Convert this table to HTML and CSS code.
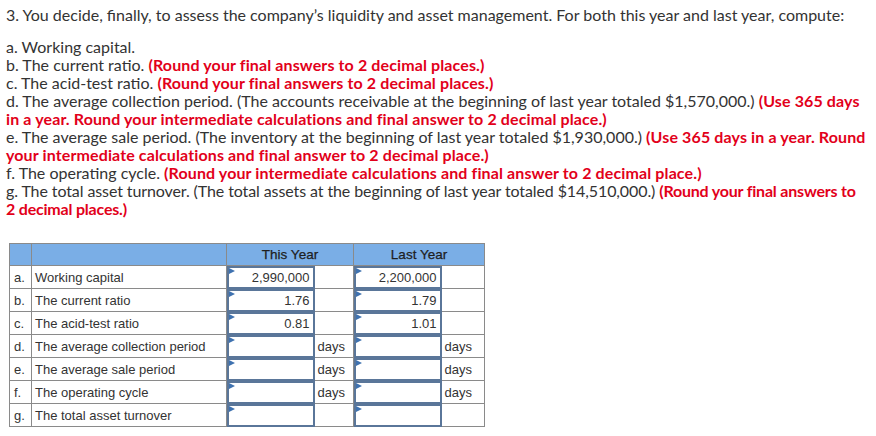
FILE: index.html
```html
<!DOCTYPE html>
<html>
<head>
<meta charset="utf-8">
<link rel="stylesheet" href="styles.css">
</head>
<body>
<div class="q">
  <p class="intro">3. You decide, finally, to assess the company’s liquidity and asset management. For both this year and last year, compute:</p>
  <div class="items">
    <div>a. Working capital.</div>
    <div>b. The current ratio. <b>(Round your final answers to 2 decimal places.)</b></div>
    <div>c. The acid-test ratio. <b>(Round your final answers to 2 decimal places.)</b></div>
    <div>d. The average collection period. (The accounts receivable at the beginning of last year totaled $1,570,000.) <b>(Use 365 days<br>in a year. Round your intermediate calculations and final answer to 2 decimal place.)</b></div>
    <div>e. The average sale period. (The inventory at the beginning of last year totaled $1,930,000.) <b>(Use 365 days in a year. Round<br>your intermediate calculations and final answer to 2 decimal place.)</b></div>
    <div>f. The operating cycle. <b>(Round your intermediate calculations and final answer to 2 decimal place.)</b></div>
    <div class="tight">g. The total asset turnover. (The total assets at the beginning of last year totaled $14,510,000.) <b>(Round your final answers to<br>2 decimal places.)</b></div>
  </div>
</div>

<table class="grid">
  <colgroup>
    <col class="c-letter"><col class="c-desc"><col class="c-in"><col class="c-unit"><col class="c-in"><col class="c-unit2">
  </colgroup>
  <thead>
    <tr><th></th><th></th><th colspan="2">This Year</th><th colspan="2">Last Year</th></tr>
  </thead>
  <tbody>
    <tr><td class="let">a.</td><td class="desc">Working capital</td><td class="in"><span class="box">2,990,000</span></td><td class="unit"></td><td class="in"><span class="box">2,200,000</span></td><td class="unit"></td></tr>
    <tr><td class="let">b.</td><td class="desc">The current ratio</td><td class="in"><span class="box">1.76</span></td><td class="unit"></td><td class="in"><span class="box">1.79</span></td><td class="unit"></td></tr>
    <tr><td class="let">c.</td><td class="desc">The acid-test ratio</td><td class="in"><span class="box">0.81</span></td><td class="unit"></td><td class="in"><span class="box">1.01</span></td><td class="unit"></td></tr>
    <tr><td class="let">d.</td><td class="desc">The average collection period</td><td class="in"><span class="box"></span></td><td class="unit">days</td><td class="in"><span class="box"></span></td><td class="unit">days</td></tr>
    <tr><td class="let">e.</td><td class="desc">The average sale period</td><td class="in"><span class="box"></span></td><td class="unit">days</td><td class="in"><span class="box"></span></td><td class="unit">days</td></tr>
    <tr><td class="let">f.</td><td class="desc">The operating cycle</td><td class="in"><span class="box"></span></td><td class="unit">days</td><td class="in"><span class="box"></span></td><td class="unit">days</td></tr>
    <tr><td class="let">g.</td><td class="desc">The total asset turnover</td><td class="in"><span class="box"></span></td><td class="unit"></td><td class="in"><span class="box"></span></td><td class="unit"></td></tr>
  </tbody>
</table>
</body>
</html>
```

FILE: styles.css
```css
html, body {
  margin: 0;
  padding: 0;
  background: #ffffff;
}
body {
  padding: 6px 0 0 6px;
}
.q {
  font-family: "Lato", "Open Sans", sans-serif;
  font-size: 16px;
  line-height: 18px;
  color: #333333;
  white-space: nowrap;
}
.intro {
  margin: 0 0 14px 0;
}
.items b {
  color: #e2001a;
  font-weight: 700;
  letter-spacing: 0.12px;
}
.items .tight {
  letter-spacing: -0.1px;
}
.items .tight b {
  letter-spacing: -0.2px;
}
.grid {
  margin: 25px 0 0 3px;
  border-collapse: collapse;
  font-family: "Liberation Sans", Arial, sans-serif;
  font-size: 13px;
  color: #333333;
  table-layout: fixed;
  width: 475px;
}
.c-letter { width: 22px; }
.c-desc { width: 195px; }
.c-in { width: 88px; }
.c-unit { width: 39px; }
.c-unit2 { width: 43px; }
.grid th {
  background: #7aaee6;
  border: 1px solid #8a8a8a;
  height: 21px;
  padding: 0;
  font-weight: normal;
  font-size: 13.5px;
  color: #1e1e1e;
  text-align: center;
  -webkit-text-stroke: 0.25px #1e1e1e;
}
.grid td {
  border: 1px solid #8a8a8a;
  height: 22px;
  padding: 0;
  vertical-align: middle;
}
.grid td.let {
  padding-left: 4px;
}
.grid td.desc {
  padding-left: 3px;
}
.grid td.unit {
  padding-left: 3px;
  border-left: none;
}
.grid td.in {
  border-right: none;
  position: relative;
}
.box {
  display: block;
  box-sizing: border-box;
  height: 23px;
  margin: -1px 0 -1px 0;
  border: 2px solid #5a7699;
  text-align: right;
  padding: 2px 3px 0 0;
  line-height: 16px;
  background: #ffffff;
  position: relative;
}
.box::before {
  content: "";
  position: absolute;
  left: 0;
  top: 0;
  border-left: 6px solid #3f72b0;
  border-top: 3px solid transparent;
  border-bottom: 3px solid transparent;
}
```
